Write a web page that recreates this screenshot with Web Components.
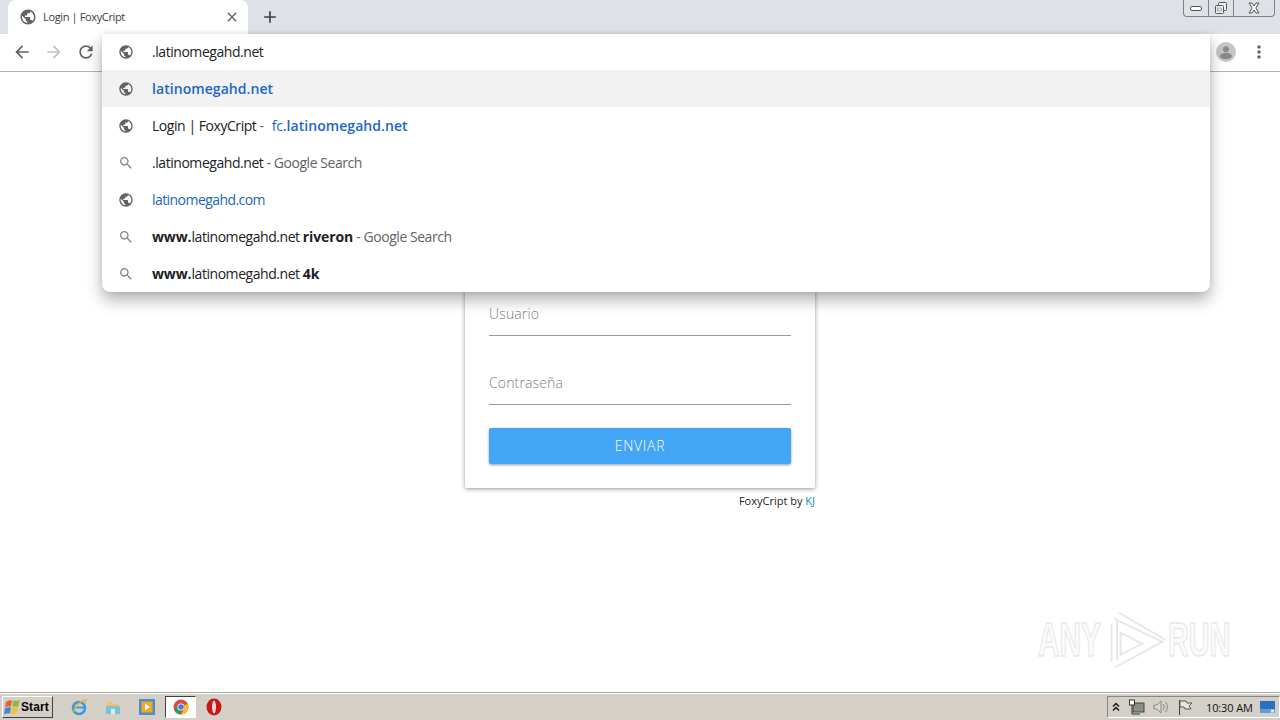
<!DOCTYPE html>
<html><head><meta charset="utf-8"><title>Login | FoxyCript</title>
<style>
html,body{margin:0;height:100%;overflow:hidden;background:#fff}
body{font-family:"Open Sans","Liberation Sans",sans-serif;}
.b{font-weight:700;color:#202124;letter-spacing:-.12px}
.t{color:#202124;letter-spacing:-.45px}
.d{color:#5f6368;letter-spacing:-.45px}
.u{color:#1a66c9;letter-spacing:-.3px;margin-left:5px}
.ub{color:#1a66c9;font-weight:600;letter-spacing:.06px}
.du{color:#1967b8;letter-spacing:-.56px}
#page{display:flex;flex-direction:column;height:720px;position:relative;overflow:hidden}
</style></head><body>
<div id="page">
  <chrome-tabstrip></chrome-tabstrip>
  <chrome-toolbar></chrome-toolbar>
  <page-main>
    <login-card>
      <md-field>Usuario</md-field>
      <md-field>Contraseña</md-field>
      <md-button>ENVIAR</md-button>
    </login-card>
  </page-main>
  <win-taskbar></win-taskbar>
  <omni-dropdown>
    <omni-row icon="globe"><span class="t">.latinomegahd.net</span></omni-row>
    <omni-row icon="globe" selected><span class="ub">latinomegahd.net</span></omni-row>
    <omni-row icon="globe"><span class="t">Login | FoxyCript</span><span class="d"> - </span><span class="u">fc</span><span class="ub">.latinomegahd.net</span></omni-row>
    <omni-row icon="search"><span class="t">.latinomegahd.net</span><span class="d"> - Google Search</span></omni-row>
    <omni-row icon="globe"><span class="du">latinomegahd.com</span></omni-row>
    <omni-row icon="search"><span class="b">www.</span><span class="t">latinomegahd.net </span><span class="b">riveron</span><span class="d"> - Google Search</span></omni-row>
    <omni-row icon="search"><span class="b">www.</span><span class="t">latinomegahd.net </span><span class="b">4k</span></omni-row>
  </omni-dropdown>
  <any-run-mark></any-run-mark>
</div>
<script>
const P={
 globe:"M12 2C6.48 2 2 6.48 2 12s4.48 10 10 10 10-4.48 10-10S17.52 2 12 2zm-1 17.93c-3.95-.49-7-3.85-7-7.93 0-.62.08-1.21.21-1.79L9 15v1c0 1.1.9 2 2 2v1.93zm6.9-2.54c-.26-.81-1-1.39-1.9-1.39h-1v-3c0-.55-.45-1-1-1H8v-2h2c.55 0 1-.45 1-1V7h2c1.1 0 2-.9 2-2v-.41c2.93 1.19 5 4.06 5 7.41 0 2.08-.8 3.97-2.1 5.39z",
 search:"M15.5 14h-.79l-.28-.27C15.41 12.59 16 11.11 16 9.5 16 5.91 13.09 3 9.5 3S3 5.91 3 9.5 5.91 16 9.5 16c1.61 0 3.09-.59 4.23-1.57l.27.28v.79l5 4.99L20.49 19l-4.99-5zm-6 0C7.01 14 5 11.99 5 9.5S7.01 5 9.5 5 14 7.01 14 9.5 11.99 14 9.5 14z",
 back:"M20 11H7.83l5.59-5.59L12 4l-8 8 8 8 1.41-1.41L7.83 13H20v-2z",
 fwd:"M12 4l-1.41 1.41L16.17 11H4v2h12.17l-5.58 5.59L12 20l8-8z",
 reload:"M17.65 6.35C16.2 4.9 14.21 4 12 4c-4.42 0-7.99 3.58-7.99 8s3.57 8 7.99 8c3.73 0 6.84-2.55 7.73-6h-2.08c-.82 2.33-3.04 4-5.65 4-3.31 0-6-2.69-6-6s2.69-6 6-6c1.66 0 3.14.69 4.22 1.78L13 11h7V4l-2.35 2.35z",
 close:"M19 6.41L17.59 5 12 10.59 6.41 5 5 6.41 10.59 12 5 17.59 6.41 19 12 13.41 17.59 19 19 17.59 13.41 12z",
 plus:"M19 13h-6v6h-2v-6H5v-2h6V5h2v6h6v2z",
 dots:"M12 8c1.1 0 2-.9 2-2s-.9-2-2-2-2 .9-2 2 .9 2 2 2zm0 2c-1.1 0-2 .9-2 2s.9 2 2 2 2-.9 2-2-.9-2-2-2zm0 6c-1.1 0-2 .9-2 2s.9 2 2 2 2-.9 2-2-.9-2-2-2z"
};
const ic=(n,s,c)=>`<svg width="${s}" height="${s}" viewBox="0 0 24 24" style="display:block;flex:none"><path fill="${c}" d="${P[n]}"/></svg>`;
class Base extends HTMLElement{
  constructor(){super();this.attachShadow({mode:'open'}).innerHTML=this.markup();}
  markup(){return ''}
}
customElements.define('chrome-tabstrip',class extends Base{markup(){return `<style>
:host{display:flex;flex:none;height:34px;background:#dee1e6;padding-left:8px;align-items:flex-end;position:relative}
.tab{width:240px;height:34px;box-sizing:border-box;background:#fff;border-radius:8px 8px 0 0;display:flex;align-items:center;padding:0 8px 0 11px;position:relative}
.tab svg:first-child{margin-right:6px}
.title{flex:1;font:11px/14px "Open Sans","Liberation Sans",sans-serif;letter-spacing:-.36px;color:#3c4043;white-space:nowrap;padding-bottom:1px}
.new{margin-left:12px;align-self:center;}
.ctl{position:absolute;right:5px;top:0;height:17px;width:92px;box-sizing:border-box;border:1px solid #7d8288;border-top:0;border-radius:0 0 4px 4px;display:grid;grid-template-columns:25px 25px 1fr;background:#dee1e6}
.ctl div{display:flex;align-items:center;justify-content:center;border-right:1px solid #7d8288}
.ctl div:last-child{border:0}
</style>
<div class="tab">${ic('globe',18,'#5f6368')}<span class="title">Login | FoxyCript</span>${ic('close',16,'#5f6368')}</div>
<div class="new">${ic('plus',20,'#3c4043')}</div>
<div class="ctl">
<div><svg width="14" height="8" viewBox="0 0 14 8"><rect x="1.5" y="2.5" width="11" height="4" rx="1.5" fill="#fff" stroke="#555"/></svg></div>
<div><svg width="14" height="13" viewBox="0 0 14 13"><rect x="4.5" y=".5" width="8" height="8" rx="1" fill="#eee" stroke="#555"/><rect x="1.5" y="3.5" width="8" height="8" rx="1" fill="#eee" stroke="#555"/><rect x="3.5" y="6" width="4" height="3" fill="#dee1e6" stroke="#888" stroke-width=".6"/></svg></div>
<div><svg width="14" height="12" viewBox="0 0 14 12"><path d="M2 1h3l2 3 2-3h3L8.8 6 12 11H9L7 8l-2 3H2l3.2-5z" fill="#fff" stroke="#555"/></svg></div>
</div>`}});
customElements.define('chrome-toolbar',class extends Base{markup(){return `<style>
:host{display:flex;flex:none;height:38px;box-sizing:border-box;background:#fff;border-bottom:1px solid #b4b4b4;align-items:center;padding:0 11px 2px 12px}
.g{display:flex;gap:12px;flex:1}
.av{width:20px;height:20px;border-radius:50%;background:#c6c6c6;overflow:hidden;margin-right:13px}
</style>
<div class="g">${ic('back',20,'#5f6368')}${ic('fwd',20,'#bdc1c6')}${ic('reload',20,'#5f6368')}</div>
<div class="av"><svg width="20" height="20" viewBox="0 0 20 20"><circle cx="10" cy="7.3" r="3" fill="#8a8a8a"/><ellipse cx="10" cy="14" rx="6" ry="3.2" fill="#8a8a8a"/></svg></div>
${ic('dots',20,'#5f6368')}`}});
customElements.define('page-main',class extends Base{markup(){return `<style>
:host{display:flex;flex-direction:column;align-items:center;flex:1;min-height:0;padding-top:128px;box-sizing:border-box;background:#fff}
.foot{width:350px;text-align:right;font:11px/14px "Open Sans","Liberation Sans",sans-serif;color:#222;margin-top:6px}
.foot span{color:#0a8fc9}
</style><slot></slot><div class="foot">FoxyCript by <span>KJ</span></div>`}});
customElements.define('login-card',class extends Base{markup(){return `<style>
:host{display:flex;flex-direction:column;width:350px;box-sizing:border-box;background:#fff;padding:67px 24px 24px;box-shadow:0 1px 4px rgba(0,0,0,.42);border-radius:2px}
</style><slot></slot>`}});
customElements.define('md-field',class extends Base{markup(){return `<style>
:host{display:flex;align-items:flex-end;height:69px;box-sizing:border-box;border-bottom:1px solid #9a9a9a;padding-bottom:11px;font:300 14px/20px "Open Sans","Liberation Sans",sans-serif;letter-spacing:.15px;color:#808080}
</style><slot></slot>`}});
customElements.define('md-button',class extends Base{markup(){return `<style>
:host{display:flex;align-items:center;justify-content:center;height:36px;box-sizing:border-box;padding-bottom:2px;margin-top:23px;background:#42a5f5;color:#fff;font:300 14px "Open Sans","Liberation Sans",sans-serif;letter-spacing:.7px;border-radius:2px;box-shadow:0 1px 3px rgba(0,0,0,.4)}
</style><slot></slot>`}});
customElements.define('omni-dropdown',class extends Base{markup(){return `<style>
:host{position:absolute;left:102px;top:34px;width:1108px;background:#fff;border-radius:0 0 8px 8px;box-shadow:0 8px 16px rgba(0,0,0,.3),0 0 5px rgba(0,0,0,.1);display:flex;flex-direction:column;overflow:hidden}
</style><slot></slot>`}});
customElements.define('omni-row',class extends HTMLElement{
 connectedCallback(){ if(this.shadowRoot) return;
  const n=this.getAttribute('icon');
  this.attachShadow({mode:'open'}).innerHTML=`<style>
:host{display:flex;align-items:center;height:37px;padding-left:16px;font:14px "Open Sans","Liberation Sans",sans-serif;white-space:pre}
:host(:first-child){height:36px;box-sizing:border-box;padding-bottom:1px}
:host([selected]){background:#f2f2f2}
.i{width:34px;flex:none}
</style><div class="i">${ic(n,16,n=='globe'?'#5f6368':'#80868b')}</div><div><slot></slot></div>`}});
customElements.define('win-taskbar',class extends Base{markup(){return `<style>
:host{display:flex;flex:none;height:28px;box-sizing:border-box;background:#d4d0c8;border-top:1px solid #a8a59e;box-shadow:inset 0 1px 0 #fff;align-items:center;padding:1px 0 0 2px;font:11px "Open Sans","Liberation Sans",sans-serif;color:#111}
.start{display:flex;align-items:center;gap:0;width:51px;height:22px;box-sizing:border-box;padding-left:1px;background:#d4d0c8;border:1px solid;border-color:#fff #404040 #404040 #fff;font:700 12px "Liberation Sans",sans-serif;letter-spacing:.1px;color:#000}
.q{display:flex;align-items:center;margin-left:9px}
.q>*{margin:0 8px 0 8px}
.act{width:31px;height:22px;box-sizing:border-box;background:#fff;border:1px solid;border-color:#404040 #fff #fff #404040;display:flex;align-items:center;justify-content:center;margin:0 4px 0 1px}
.sp{flex:1}
.tray{display:flex;align-items:center;height:22px;box-sizing:border-box;border:1px solid;border-color:#8a8780 #fff #fff #8a8780;padding:0 4px 0 2px;width:173px}
.tray svg{flex:none}
.clock{margin:0 7px 0 12px;white-space:nowrap;letter-spacing:-.12px}
</style>
<div class="start"><svg width="17" height="16" viewBox="0 0 17 16"><path d="M2 3c2-1.5 4-2 6-1.5L7 7.5C5 7 3 7.5 1 8.5z" fill="#e8622a"/><path d="M9 1.5c2 .5 4 .5 6.500-.5l-1 6c-2 1-4 1-6 .5z" fill="#8cb84a"/><path d="M1 9.500c2-1 4-1.500 6-1l-1 6c-2-.5-4 0-6 1z" fill="#3f86d6"/><path d="M8 8.500c2 .5 4 .5 6-.5l-1 6c-2 1-4 1-6 .5z" fill="#f5c02a"/></svg>Start</div>
<div class="q">
<svg width="18" height="18" viewBox="0 0 18 18"><circle cx="9" cy="10" r="6" fill="none" stroke="#3a9bdc" stroke-width="2.6"/><path d="M4 9.5h10" stroke="#3a9bdc" stroke-width="2"/><path d="M3 14c4-8 9-12 13-12-1 1-1 3-1 4" fill="none" stroke="#e0b83c" stroke-width="1.3"/></svg>
<svg width="18" height="18" viewBox="0 0 18 18"><path d="M3 4h5l2 2h5v3H3z" fill="#e9c75a"/><path d="M2 8h14v8H2z" fill="#7cc0e0"/><path d="M7 11h4v5H7z" fill="#d8eef6"/></svg>
<svg width="18" height="18" viewBox="0 0 18 18"><rect x="1" y="1" width="16" height="16" fill="#4a8fc9"/><rect x="3.5" y="3.5" width="11" height="11" fill="#f6a623"/><path d="M7 5.5l5 3.5-5 3.5z" fill="#fff"/></svg>
</div>
<div class="act"><svg width="16" height="16" viewBox="0 0 16 16"><circle cx="8" cy="8" r="7.5" fill="#dd4b3e"/><path d="M8 15.5A7.5 7.5 0 0 1 1.5 11.7L5 6z" fill="#1fa463"/><path d="M15.5 8A7.5 7.5 0 0 1 8 15.5l3.500-6 .5-4h3z" fill="#fbc116"/><circle cx="8" cy="8" r="3.6" fill="#fff"/><circle cx="8" cy="8" r="2.8" fill="#3d7fe0"/></svg></div>
<svg style="margin-left:6px" width="16" height="18" viewBox="0 0 16 18"><ellipse cx="8" cy="9" rx="7.5" ry="8.5" fill="#c9161c"/><ellipse cx="8" cy="9" rx="2" ry="6.5" fill="#f0d8d0"/></svg>
<div class="sp"></div>
<div class="tray">
<svg width="12" height="12" viewBox="0 0 12 12"><path d="M3 5.5l3-3 3 3M3 9.5l3-3 3 3" fill="none" stroke="#111" stroke-width="1.4"/></svg>
<svg style="margin-left:6px" width="18" height="18" viewBox="0 0 18 18"><rect x="5" y="5" width="11" height="9" fill="#8a8f8a" stroke="#444"/><rect x="1.5" y="2" width="5" height="5" fill="#fff" stroke="#333"/><path d="M4 7v9h8" fill="none" stroke="#333"/></svg>
<svg style="margin-left:6px" width="18" height="18" viewBox="0 0 18 18"><path d="M2 7h3l4-4v12l-4-4H2z" fill="#d8d8d8" stroke="#888"/><path d="M11 6c1.5 2 1.5 4 0 6M13.5 4c2.5 3 2.5 7 0 10" fill="none" stroke="#888"/></svg>
<svg style="margin-left:6px" width="18" height="18" viewBox="0 0 18 18"><path d="M3.5 2v15" stroke="#444"/><path d="M4 3h6l1 2h5l-3 3 2 3H9l-1-2H4z" fill="#e8e6e0" stroke="#555"/></svg>
<span class="clock">10:30 AM</span>
<svg width="15" height="12" viewBox="0 0 15 12"><rect width="15" height="12" fill="#2a6fc0"/><rect y="8" width="15" height="4" fill="#5fa0dc"/><rect x="11" y="8.500" width="3" height="3" fill="#dfe8f0"/></svg>
</div>`}});
customElements.define('any-run-mark',class extends Base{markup(){return `<style>
:host{position:absolute;left:1036px;top:606px;width:198px;height:68px;font:700 48px "Liberation Sans",sans-serif;color:#fbfbfb;-webkit-text-stroke:1.5px #e8e8e8}
.a,.r{display:inline-block;transform-origin:left center;white-space:nowrap;position:absolute;top:6px}
.a{left:2px;transform:scaleX(.62)}
.r{left:132px;transform:scaleX(.6)}
svg{position:absolute;left:72px;top:1px}
</style><span class="a">ANY</span><svg width="58" height="66" viewBox="0 0 64 64" fill="none" stroke="#e6e6e6" stroke-width="2"><path d="M6 8L60 34 8 62"/><path d="M4 14V56"/><path d="M12 2L64 32"/><path d="M14 24l24 12-24 12z"/><path d="M10 10V54"/></svg><span class="r">RUN</span>`}});
</script>
</body></html>
